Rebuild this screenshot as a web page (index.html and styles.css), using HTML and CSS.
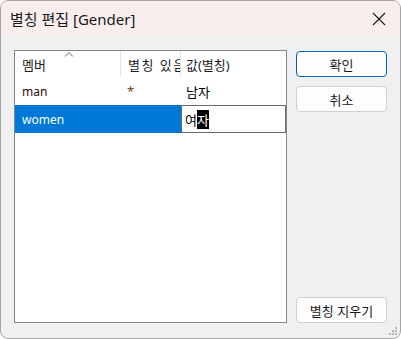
FILE: index.html
```html
<!DOCTYPE html>
<html lang="ko">
<head>
  <meta charset="UTF-8">
  <title>별칭 편집 [Gender]</title>
  <link rel="stylesheet" href="styles.css">
</head>
<body>
  <div class="window">
    <!-- Title bar -->
    <div class="titlebar">
      <span class="title">별칭 편집 [Gender]</span>
      <svg class="close" width="14" height="14" viewBox="0 0 14 14">
        <path d="M1 1 L13 13 M13 1 L1 13" stroke="#1a1a1a" stroke-width="1.1" fill="none"/>
      </svg>
    </div>

    <div class="content">
      <!-- List view -->
      <div class="list">
        <div class="row header">
          <div class="cell c1">멤버
            <svg class="sort" width="10" height="6" viewBox="0 0 10 6">
              <path d="M1 5.5 L5 1.5 L9 5.5" stroke="#666" stroke-width="1" fill="none"/>
            </svg>
          </div>
          <div class="cell c2">별칭 있음</div>
          <div class="cell c3">값(별칭)</div>
        </div>
        <div class="row">
          <div class="cell c1 member">man</div>
          <div class="cell c2 star">*</div>
          <div class="cell c3">남자</div>
        </div>
        <div class="row selected">
          <div class="cell c1">women</div>
          <div class="cell c2"></div>
          <div class="cell c3 edit">여<span class="sel">자</span></div>
        </div>
      </div>

      <!-- Buttons -->
      <div class="buttons">
        <button class="btn default">확인</button>
        <button class="btn">취소</button>
        <div class="spacer"></div>
        <button class="btn">별칭 지우기</button>
      </div>
    </div>

    <svg class="grip" width="10" height="10" viewBox="0 0 10 10">
      <rect x="7" y="1" width="2" height="2" fill="#b4b4b4"/>
      <rect x="4" y="4" width="2" height="2" fill="#b4b4b4"/>
      <rect x="7" y="4" width="2" height="2" fill="#b4b4b4"/>
      <rect x="1" y="7" width="2" height="2" fill="#b4b4b4"/>
      <rect x="4" y="7" width="2" height="2" fill="#b4b4b4"/>
      <rect x="7" y="7" width="2" height="2" fill="#b4b4b4"/>
    </svg>
  </div>
</body>
</html>
```

FILE: styles.css
```css
body {
  margin: 0;
  background: #ffffff;
  font-family: "Noto Sans", "Noto Sans CJK KR", sans-serif;
  font-size: 12px;
  color: #000;
}

/* Dialog window */
.window {
  position: relative;
  width: 401px;
  height: 339px;
  box-sizing: border-box;
  border: 1px solid #a6a6a6;
  border-radius: 8px;
  background: #f0f0f0;
  overflow: hidden;
  display: flex;
  flex-direction: column;
}

.titlebar {
  height: 36px;
  flex: none;
  background: #f9eeee;
  display: flex;
  align-items: center;
  justify-content: space-between;
  padding: 0 14px 0 9px;
}

.title {
  font-size: 15px;
  color: #1a1a1a;
  margin-top: -1px;
}

.close {
  margin-top: -1px;
}

.content {
  flex: 1;
  display: flex;
  gap: 9px;
  padding: 13px 0 15px 13px;
}

/* List view */
.list {
  width: 273px;
  box-sizing: border-box;
  border: 1px solid #828790;
  background: #fff;
}

.row {
  display: flex;
  height: 28px;
  align-items: center;
}

.header {
  height: 26px;
}

.cell {
  box-sizing: border-box;
  padding-left: 7px;
  height: 100%;
  display: flex;
  align-items: center;
  white-space: nowrap;
  overflow: hidden;
}

.header .cell {
  font-size: 13px;
  color: #1a1a1a;
  border-right: 1px solid #e5e5e5;
  position: relative;
}

.header .c2 {
  letter-spacing: 1.5px;
  padding-left: 7px;
}

.header .c3 {
  border-right: none;
}

.c1 { width: 106px; }
.c2 { width: 60px; padding-left: 6px; }
.c3 { flex: 1; padding-left: 5px; font-size: 13px; }

.sort {
  position: absolute;
  left: 49px;
  top: 0;
}

.member {
  color: #2a0c0c;
}

.star {
  color: #6a4416;
  font-size: 13px;
  align-items: flex-start;
  padding-top: 5px;
}

.selected .c1,
.selected .c2 {
  background: #0078d7;
  color: #fff;
}

.edit {
  border: 1px solid #6a6a6a;
  padding-left: 3px;
  background: #fff;
}

.sel {
  background: #000;
  color: #fff;
}

/* Buttons */
.buttons {
  width: 91px;
  display: flex;
  flex-direction: column;
  gap: 9px;
  padding-top: 1px;
}

.spacer {
  flex: 1;
}

.btn {
  height: 26px;
  box-sizing: border-box;
  border: 1px solid #d0d0d0;
  border-radius: 4px;
  background: #fdfdfd;
  font-family: "Noto Sans CJK KR", sans-serif;
  font-size: 13px;
  color: #1a1a1a;
  padding: 0;
}

.btn.default {
  border-color: #005fb8;
}

.grip {
  position: absolute;
  right: 2px;
  bottom: 2px;
}
```
